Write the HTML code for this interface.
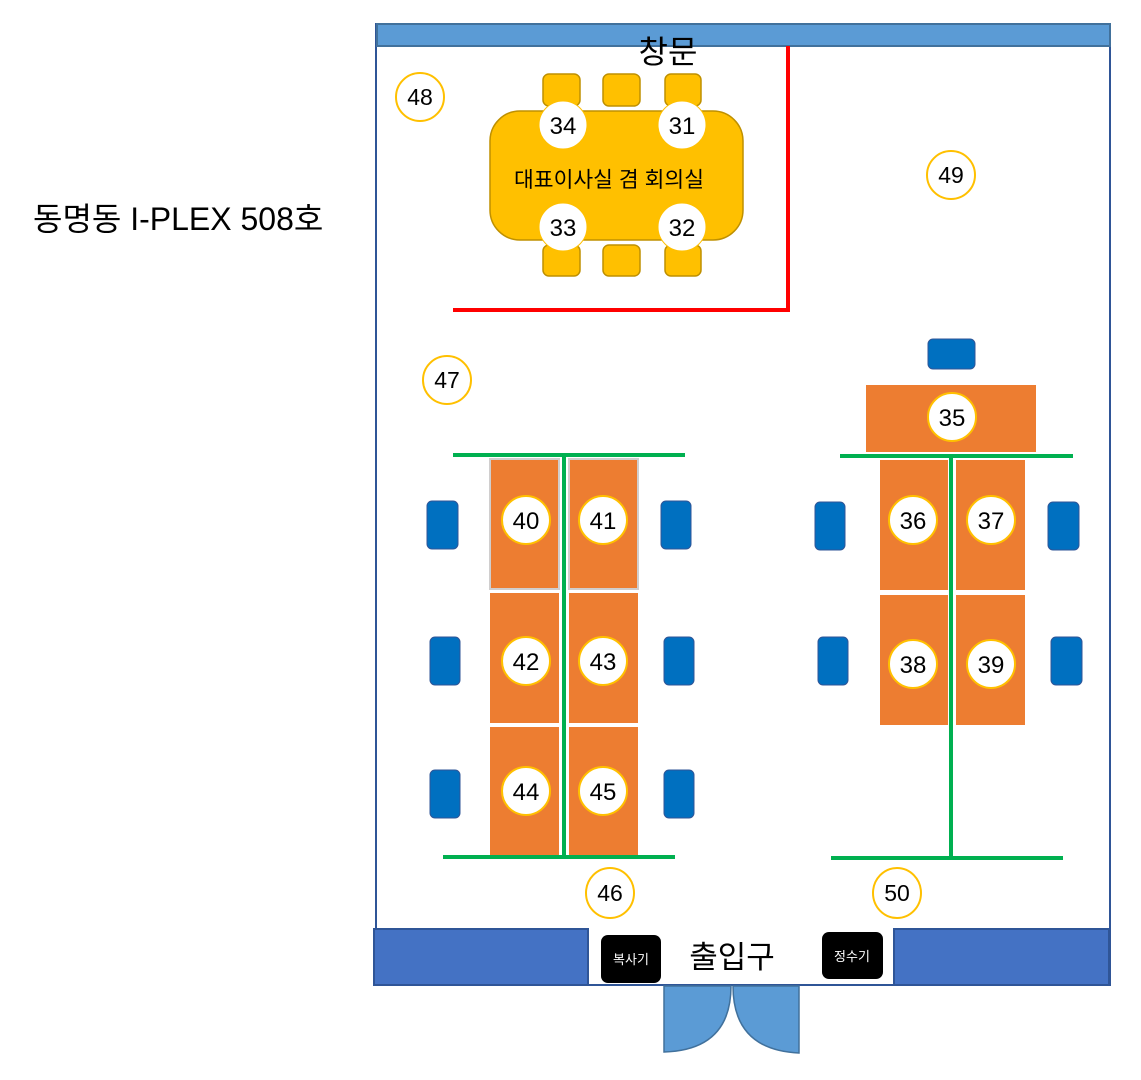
<!DOCTYPE html>
<html><head><meta charset="utf-8"><style>
html,body{margin:0;padding:0;background:#fff;}
svg{display:block;}
text{font-family:"Liberation Sans","Noto Sans CJK KR",sans-serif;fill:#000;}
</style></head><body>
<svg width="1141" height="1080" viewBox="0 0 1141 1080" xmlns="http://www.w3.org/2000/svg">
<rect x="376" y="24" width="734" height="961" fill="#fff" stroke="#2f5597" stroke-width="2"/>
<rect x="377" y="24" width="733" height="22" fill="#5b9bd5" stroke="#41719c" stroke-width="2"/>
<text x="668" y="63" font-size="32" text-anchor="middle">창문</text>
<text x="33" y="230" font-size="32">동명동 I-PLEX 508호</text>
<path d="M788 46 V310 H453" fill="none" stroke="#ff0000" stroke-width="4"/>
<g fill="#ffc000" stroke="#bf9000" stroke-width="1.5">
<rect x="543" y="74" width="37" height="32" rx="6"/>
<rect x="603" y="74" width="37" height="32" rx="6"/>
<rect x="665" y="74" width="36" height="32" rx="6"/>
<rect x="543" y="245" width="37" height="31" rx="6"/>
<rect x="603" y="245" width="37" height="31" rx="6"/>
<rect x="665" y="245" width="36" height="31" rx="6"/>
<rect x="490" y="111" width="253" height="129" rx="30"/>
</g>
<text x="609" y="187" font-size="21.5" text-anchor="middle">대표이사실 겸 회의실</text>
<g fill="#fff" stroke="#ffc000" stroke-width="1">
<circle cx="563" cy="125" r="24"/><circle cx="682" cy="125" r="24"/>
<circle cx="563" cy="227" r="24"/><circle cx="682" cy="227" r="24"/>
</g>
<g font-size="24" text-anchor="middle">
<text x="563" y="134">34</text><text x="682" y="134">31</text>
<text x="563" y="236">33</text><text x="682" y="236">32</text>
</g>
<g fill="#fff" stroke="#ffc000" stroke-width="2">
<circle cx="420" cy="97" r="24"/><circle cx="951" cy="175" r="24"/>
<circle cx="447" cy="380" r="24"/>
<ellipse cx="610" cy="893" rx="24" ry="25"/><ellipse cx="897" cy="893" rx="24" ry="25"/>
</g>
<g font-size="23" text-anchor="middle">
<text x="420" y="105">48</text><text x="951" y="183">49</text><text x="447" y="388">47</text>
<text x="610" y="901">46</text><text x="897" y="901">50</text>
</g>
<g fill="#ed7d31">
<rect x="490" y="459" width="69" height="130" stroke="#d0cece" stroke-width="2"/>
<rect x="569" y="459" width="69" height="130" stroke="#d0cece" stroke-width="2"/>
<rect x="490" y="593" width="69" height="130"/><rect x="569" y="593" width="69" height="130"/>
<rect x="490" y="727" width="69" height="130"/><rect x="569" y="727" width="69" height="130"/>
</g>
<g stroke="#00b050" stroke-width="4">
<line x1="453" y1="455" x2="685" y2="455"/>
<line x1="564" y1="455" x2="564" y2="857"/>
<line x1="443" y1="857" x2="675" y2="857"/>
</g>
<rect x="866" y="385" width="170" height="67" fill="#ed7d31"/>
<g fill="#ed7d31">
<rect x="880" y="460" width="68" height="130"/><rect x="956" y="460" width="69" height="130"/>
<rect x="880" y="595" width="68" height="130"/><rect x="956" y="595" width="69" height="130"/>
</g>
<g stroke="#00b050" stroke-width="4">
<line x1="840" y1="456" x2="1073" y2="456"/>
<line x1="951" y1="456" x2="951" y2="857"/>
<line x1="831" y1="858" x2="1063" y2="858"/>
</g>
<g fill="#fff" stroke="#ffc000" stroke-width="2">
<circle cx="526" cy="520" r="24"/><circle cx="603" cy="520" r="24"/>
<circle cx="526" cy="661" r="24"/><circle cx="603" cy="661" r="24"/>
<circle cx="526" cy="791" r="24"/><circle cx="603" cy="791" r="24"/>
<circle cx="952" cy="417" r="24"/>
<circle cx="913" cy="520" r="24"/><circle cx="991" cy="520" r="24"/>
<circle cx="913" cy="664" r="24"/><circle cx="991" cy="664" r="24"/>
</g>
<g font-size="24" text-anchor="middle">
<text x="526" y="529">40</text><text x="603" y="529">41</text>
<text x="526" y="670">42</text><text x="603" y="670">43</text>
<text x="526" y="800">44</text><text x="603" y="800">45</text>
<text x="952" y="426">35</text>
<text x="913" y="529">36</text><text x="991" y="529">37</text>
<text x="913" y="673">38</text><text x="991" y="673">39</text>
</g>
<g fill="#0070c0" stroke="#2f5597" stroke-width="1">
<rect x="427" y="501" width="31" height="48" rx="5"/>
<rect x="430" y="637" width="30" height="48" rx="5"/>
<rect x="430" y="770" width="30" height="48" rx="5"/>
<rect x="661" y="501" width="30" height="48" rx="5"/>
<rect x="664" y="637" width="30" height="48" rx="5"/>
<rect x="664" y="770" width="30" height="48" rx="5"/>
<rect x="928" y="339" width="47" height="30" rx="5"/>
<rect x="815" y="502" width="30" height="48" rx="5"/>
<rect x="818" y="637" width="30" height="48" rx="5"/>
<rect x="1048" y="502" width="31" height="48" rx="5"/>
<rect x="1051" y="637" width="31" height="48" rx="5"/>
</g>
<rect x="374" y="929" width="214" height="56" fill="#4472c4" stroke="#2f5597" stroke-width="2"/>
<rect x="894" y="929" width="215" height="56" fill="#4472c4" stroke="#2f5597" stroke-width="2"/>
<rect x="601" y="935" width="60" height="48" rx="7" fill="#000"/>
<rect x="822" y="932" width="61" height="47" rx="7" fill="#000"/>
<text x="631" y="964" font-size="13" text-anchor="middle" style="fill:#fff">복사기</text>
<text x="852" y="961" font-size="13" text-anchor="middle" style="fill:#fff">정수기</text>
<text x="732" y="968" font-size="31" text-anchor="middle">출입구</text>
<g fill="#5b9bd5" stroke="#41719c" stroke-width="1.5">
<path d="M664 986 H731 Q731 1050 664 1052 Z"/>
<path d="M799 986 H733 Q733 1050 799 1053 Z"/>
</g>
</svg>
</body></html>
